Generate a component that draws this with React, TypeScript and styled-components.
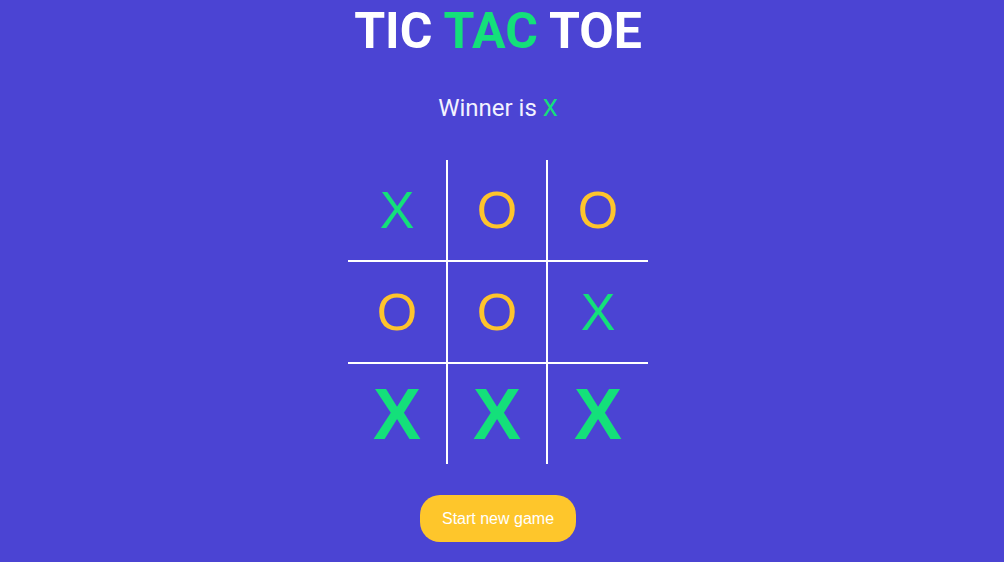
import React from "react";
import styled, { createGlobalStyle } from "styled-components";

const GlobalStyle = createGlobalStyle`
  html, body {
    margin: 0;
    padding: 0;
    background: #4b44d3;
  }
  body {
    font-family: Roboto, "Liberation Sans", Arial, sans-serif;
  }
`;

const Page = styled.div`
  min-height: 562px;
  box-sizing: border-box;
  padding: 2px 8px 0 0;
  display: flex;
  flex-direction: column;
  align-items: center;
  background: #4b44d3;
`;

const Title = styled.h1`
  margin: 0;
  font-family: Roboto, "Liberation Sans", sans-serif;
  font-weight: 700;
  font-size: 50px;
  line-height: 58px;
  color: #ffffff;
`;

const Accent = styled.span`
  color: #14e07a;
`;

const Status = styled.p`
  margin: 34px 0 0;
  font-family: Roboto, "Liberation Sans", sans-serif;
  font-weight: 400;
  font-size: 24px;
  line-height: 28px;
  color: #f2f2ff;
`;

const Board = styled.div`
  margin-top: 38px;
  display: grid;
  grid-template-columns: repeat(3, auto);
`;

type CellProps = { $right: boolean; $bottom: boolean };

const Cell = styled.div<CellProps>`
  box-sizing: content-box;
  width: ${(p) => (p.$right ? 98 : 100)}px;
  height: 100px;
  border-right: ${(p) => (p.$right ? "2px solid #ffffff" : "none")};
  border-bottom: ${(p) => (p.$bottom ? "2px solid #ffffff" : "none")};
  display: flex;
  align-items: center;
  justify-content: center;
`;

type MarkProps = { $player: "X" | "O"; $win: boolean };

const Mark = styled.span<MarkProps>`
  font-family: "Liberation Sans", Arial, sans-serif;
  font-size: ${(p) => (p.$win ? 72 : 52)}px;
  font-weight: ${(p) => (p.$win ? 700 : 400)};
  line-height: 1;
  color: ${(p) => (p.$player === "X" ? "#14e07a" : "#fec42c")};
`;

const Button = styled.button`
  margin-top: 31px;
  height: 47px;
  padding: 0 22px;
  border: none;
  border-radius: 20px;
  background: #fec62b;
  color: #ffffff;
  font-family: "Liberation Sans", Arial, sans-serif;
  font-size: 16px;
  cursor: pointer;
`;

const board: ("X" | "O")[] = ["X", "O", "O", "O", "O", "X", "X", "X", "X"];
const winning = [6, 7, 8];

export default function App() {
  return (
    <>
      <GlobalStyle />
      <Page>
        <Title>
          TIC <Accent>TAC</Accent> TOE
        </Title>
        <Status>
          Winner is <Accent>X</Accent>
        </Status>
        <Board>
          {board.map((v, i) => (
            <Cell key={i} $right={i % 3 !== 2} $bottom={i < 6}>
              <Mark $player={v} $win={winning.includes(i)}>
                {v}
              </Mark>
            </Cell>
          ))}
        </Board>
        <Button>Start new game</Button>
      </Page>
    </>
  );
}
